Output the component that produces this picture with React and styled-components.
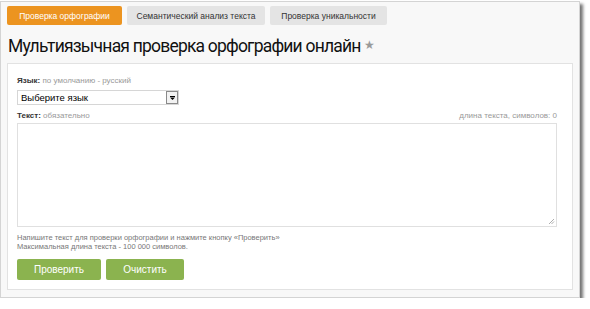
import React from "react";
import styled, { createGlobalStyle } from "styled-components";

const Global = createGlobalStyle`
  html, body {
    margin: 0;
    padding: 0;
    background: #ffffff;
  }
  body {
    font-family: "Liberation Sans", Arial, sans-serif;
  }
`;

const Frame = styled.div`
  box-sizing: border-box;
  width: 580px;
  height: 297px;
  margin-top: 1px;
  background: #f8f8f8;
  border: 1px solid #d4d4d4;
  box-shadow: 3px 3px 3px rgba(0, 0, 0, 0.55);
  padding: 4px 6px 0 6px;
  display: flex;
  flex-direction: column;
`;

const Tabs = styled.div`
  display: flex;
  gap: 5px;
`;

const Tab = styled.div`
  width: ${(p) => p.w}px;
  height: 19px;
  border-radius: 2px;
  display: flex;
  align-items: center;
  justify-content: center;
  font-size: 8.5px;
  background: ${(p) => (p.active ? "#ec9420" : "#e4e4e4")};
  color: ${(p) => (p.active ? "#ffffff" : "#333333")};
`;

const Title = styled.h1`
  margin: 9px 0 0 1px;
  font-family: Roboto, "Liberation Sans", sans-serif;
  font-weight: 400;
  font-size: 17.5px;
  letter-spacing: -0.8px;
  line-height: 24px;
  color: #111;
  display: flex;
  align-items: center;
  gap: 3px;
`;

const Star = styled.span`
  color: #9a9a9a;
  font-size: 12px;
  letter-spacing: 0;
  margin-top: -2px;
`;

const Card = styled.div`
  margin-top: 5px;
  width: 566px;
  height: 227px;
  box-sizing: border-box;
  background: #ffffff;
  border: 1px solid #e2e2e2;
  padding: 12px 15px 0 9px;
  display: flex;
  flex-direction: column;
`;

const LabelRow = styled.div`
  display: flex;
  justify-content: space-between;
  font-size: 8px;
  line-height: 10px;
  color: #333;
`;

const Label = styled.span`
  b {
    font-weight: bold;
    color: #333;
  }
  span {
    color: #999;
  }
`;

const Counter = styled.span`
  color: #999;
`;

const Select = styled.div`
  margin: 4px 0 6px 0;
  width: 162px;
  height: 15px;
  box-sizing: border-box;
  border: 1px solid #d6d6d6;
  display: flex;
  align-items: center;
  justify-content: space-between;
  font-size: 9.5px;
  color: #000;
  padding-left: 3px;
`;

const Arrow = styled.div`
  width: 12px;
  height: 13px;
  box-sizing: border-box;
  border: 1px solid #8a8a8a;
  background: #f2f2f2;
  display: flex;
  align-items: center;
  justify-content: center;
`;

const TextArea = styled.div`
  position: relative;
  margin-top: 2px;
  width: 540px;
  height: 104px;
  box-sizing: border-box;
  border: 1px solid #e0e0e0;
`;

const Grip = styled.svg`
  position: absolute;
  right: 1px;
  bottom: 1px;
`;

const Hint = styled.div`
  margin-top: 7px;
  font-size: 7.5px;
  line-height: 8.5px;
  color: #777;
`;

const Buttons = styled.div`
  margin-top: 8px;
  display: flex;
  gap: 5px;
`;

const Button = styled.div`
  width: ${(p) => p.w}px;
  height: 21px;
  border-radius: 2px;
  background: #8bb34f;
  color: #fff;
  font-size: 10px;
  display: flex;
  align-items: center;
  justify-content: center;
`;

export default function App() {
  return (
    <>
      <Global />
      <Frame>
        <Tabs>
          <Tab active w={115}>Проверка орфографии</Tab>
          <Tab w={138}>Семантический анализ текста</Tab>
          <Tab w={117}>Проверка уникальности</Tab>
        </Tabs>
        <Title>
          Мультиязычная проверка орфографии онлайн<Star>★</Star>
        </Title>
        <Card>
          <LabelRow>
            <Label>
              <b>Язык:</b> <span>по умолчанию - русский</span>
            </Label>
          </LabelRow>
          <Select>
            Выберите язык
            <Arrow>
              <svg width="5" height="4" viewBox="0 0 5 4">
                <rect x="0" y="0" width="5" height="1" fill="#000" />
                <path d="M0 1.5 H5 L2.5 4 Z" fill="#000" />
              </svg>
            </Arrow>
          </Select>
          <LabelRow>
            <Label>
              <b>Текст:</b> <span>обязательно</span>
            </Label>
            <Counter>длина текста, символов: 0</Counter>
          </LabelRow>
          <TextArea>
            <Grip width="7" height="7" viewBox="0 0 7 7">
              <path d="M6 1 L1 6 M6 3.5 L3.5 6" stroke="#999" strokeWidth="0.8" />
            </Grip>
          </TextArea>
          <Hint>
            Напишите текст для проверки орфографии и нажмите кнопку «Проверить»
            <br />
            Максимальная длина текста - 100 000 символов.
          </Hint>
          <Buttons>
            <Button w={84}>Проверить</Button>
            <Button w={78}>Очистить</Button>
          </Buttons>
        </Card>
      </Frame>
    </>
  );
}
